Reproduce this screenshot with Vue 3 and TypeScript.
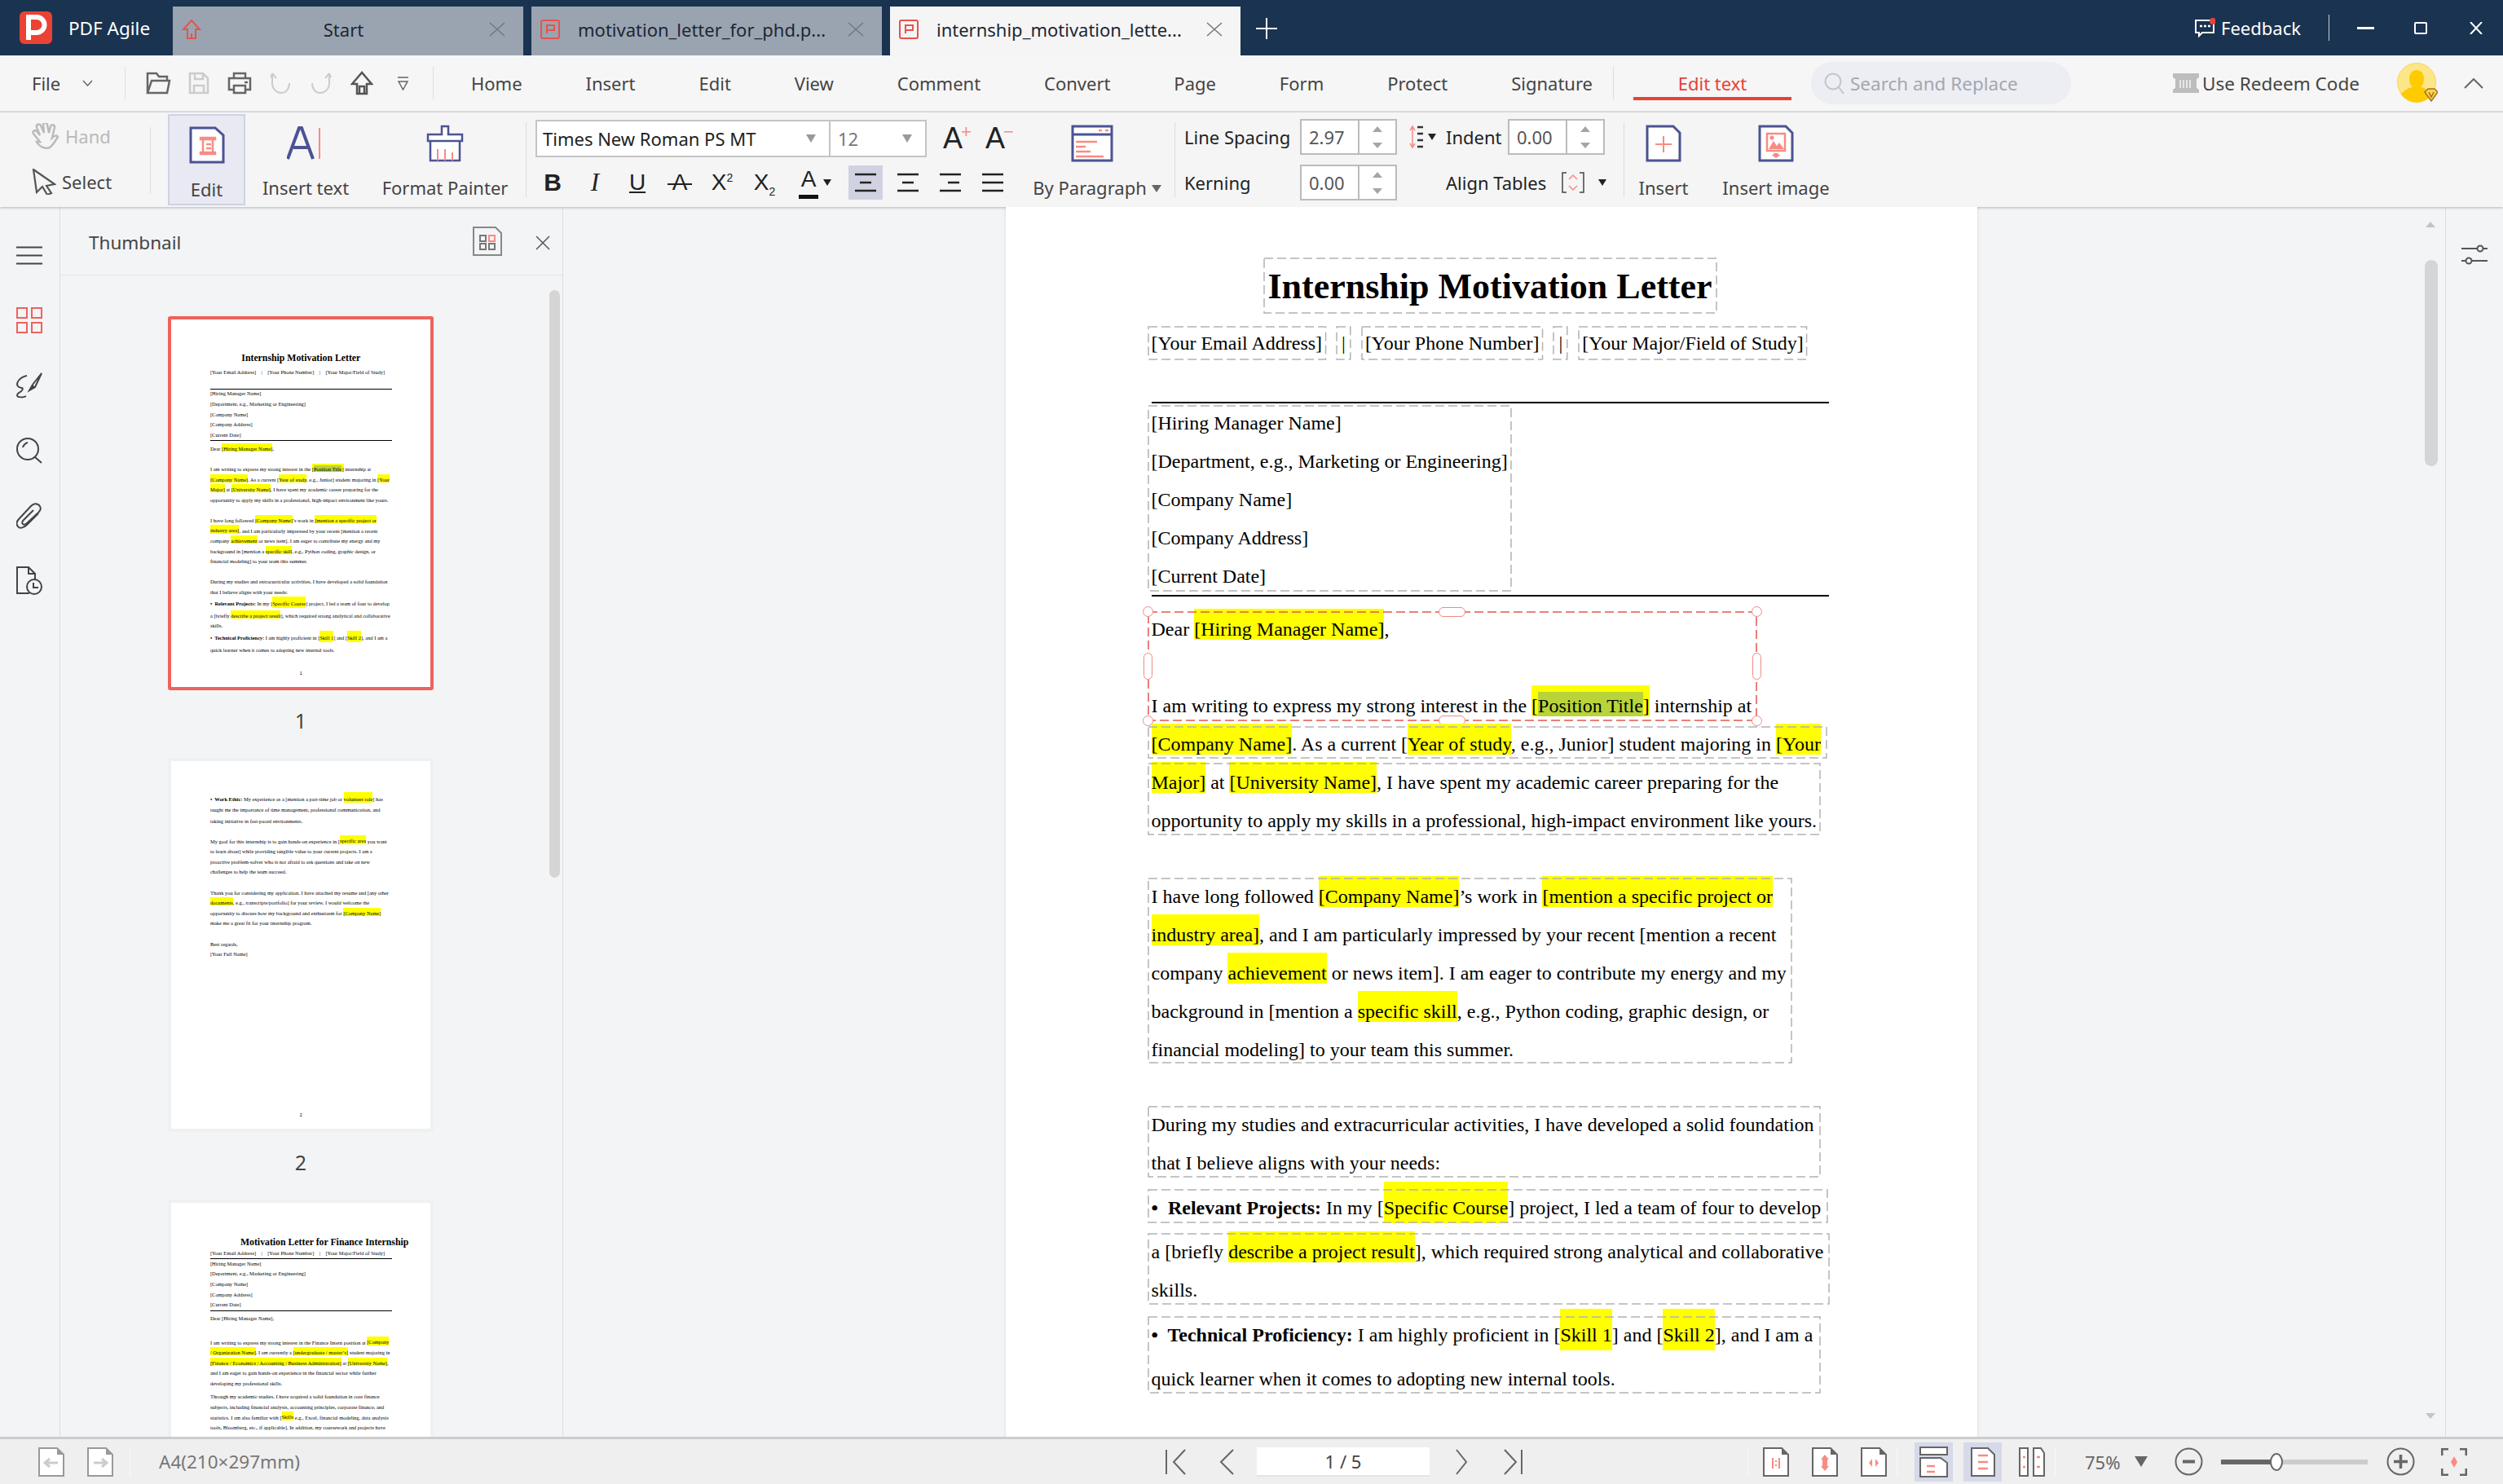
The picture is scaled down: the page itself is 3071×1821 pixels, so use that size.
<template>
  <div class="app">
    <!-- title bar -->
    <header class="titlebar">
      <div class="brand">
        <svg class="logo" width="40" height="40" viewBox="0 0 40 40"><rect width="40" height="40" rx="6" fill="#ea4335"/><path d="M11 35V7h10a9.500 9.500 0 0 1 0 19H11" fill="none" stroke="#fff" stroke-width="6"/></svg>
        <span>PDF Agile</span>
      </div>
      <div class="tab">
        <svg class="tab-ic" width="24" height="24" viewBox="0 0 24 24"><path d="M12 1 2 12h5v11h10V12h5z" fill="none" stroke="#e8524a" stroke-width="2"/><path d="M12 17v6" stroke="#e8524a" stroke-width="2"/></svg>
        <span class="tab-name center">Start</span>
        <svg class="tab-x" width="20" height="18" viewBox="0 0 20 18"><path d="m1 1 18 16M19 1 1 17" stroke="#6f7680" stroke-width="1.500"/></svg>
      </div>
      <div class="tab">
        <svg class="tab-ic" width="24" height="24" viewBox="0 0 24 24"><rect x="1" y="1" width="22" height="22" rx="2" fill="none" stroke="#e8524a" stroke-width="2"/><path d="M8 17V7h9v6H8" fill="none" stroke="#e8524a" stroke-width="2"/></svg>
        <span class="tab-name">motivation_letter_for_phd.p...</span>
        <svg class="tab-x" width="20" height="18" viewBox="0 0 20 18"><path d="m1 1 18 16M19 1 1 17" stroke="#6f7680" stroke-width="1.500"/></svg>
      </div>
      <div class="tab active">
        <svg class="tab-ic" width="24" height="24" viewBox="0 0 24 24"><rect x="1" y="1" width="22" height="22" rx="2" fill="none" stroke="#e8524a" stroke-width="2"/><path d="M8 17V7h9v6H8" fill="none" stroke="#e8524a" stroke-width="2"/></svg>
        <span class="tab-name">internship_motivation_lette...</span>
        <svg class="tab-x" width="20" height="18" viewBox="0 0 20 18"><path d="m1 1 18 16M19 1 1 17" stroke="#6f7680" stroke-width="1.500"/></svg>
      </div>
      <svg class="new-tab" width="28" height="28" viewBox="0 0 28 28"><path d="M14 1v26M1 14h26" stroke="#fff" stroke-width="2"/></svg>
      <div class="win">
        <svg width="26" height="24" viewBox="0 0 26 24"><path d="M2 3h22v15H10l-4 4v-4H2z" fill="#1a3350" stroke="#fff" stroke-width="2"/><path d="M7 10h3M12 10h3M17 10h3" stroke="#fff" stroke-width="2.500"/><circle cx="23" cy="4" r="4" fill="#e8423a"/></svg>
        <span class="feedback">Feedback</span>
        <i class="win-sep"></i>
        <svg class="w-min" width="21" height="3" viewBox="0 0 21 3"><path d="M0 1.500h21" stroke="#fff" stroke-width="3"/></svg>
        <svg class="w-max" width="16" height="15" viewBox="0 0 16 15"><rect x="1" y="1" width="14" height="13" rx="1" fill="none" stroke="#fff" stroke-width="2"/></svg>
        <svg class="w-close" width="16" height="15" viewBox="0 0 16 15"><path d="m1 0 14 15M15 0 1 15" stroke="#fff" stroke-width="2"/></svg>
      </div>
    </header>

    <!-- menu row -->
    <nav class="menubar">
      <span class="file">File</span>
      <svg class="file-caret" width="13" height="8" viewBox="0 0 13 8"><path d="m1 1 5.500 6L12 1" fill="none" stroke="#666" stroke-width="1.500"/></svg>
      <i class="msep first"></i>
      <div class="quick">
        <svg width="32" height="28" viewBox="0 0 32 28"><path d="M3 26V2h11l3 4h10v5M3 26h24l3-15H8z" fill="none" stroke="#666" stroke-width="2.500"/></svg>
        <svg width="28" height="28" viewBox="0 0 28 28"><path d="M3 2h16l6 6v18H3zM9 2v7h10V2M8 26v-9h12v9" fill="none" stroke="#ccc" stroke-width="2.500"/></svg>
        <svg width="30" height="28" viewBox="0 0 30 28"><path d="M8 8V2h14v6M8 22H2V8h26v14h-6M8 17h14v9H8z" fill="none" stroke="#666" stroke-width="2.500"/><path d="M21 13h4" stroke="#666" stroke-width="2.500"/></svg>
        <svg width="26" height="28" viewBox="0 0 26 28"><path d="M3 14V2M3 2l5 6M3 2 1 7M3 14c0 7 5 12 11 12s10-5 10-12" fill="none" stroke="#ccc" stroke-width="2"/></svg>
        <svg width="26" height="28" viewBox="0 0 26 28"><path d="M23 14V2m0 0-5 6m5-6 2 5M23 14c0 7-5 12-11 12S2 21 2 14" fill="none" stroke="#ccc" stroke-width="2"/></svg>
        <svg width="28" height="30" viewBox="0 0 28 30"><path d="M14 2 2 16h6v12h12V16h6zM11 28v-9h6v9" fill="none" stroke="#555" stroke-width="2.500"/></svg>
        <svg width="15" height="18" viewBox="0 0 15 18"><path d="M1 2h13M2 7l5.500 10L13 7z" fill="none" stroke="#666" stroke-width="1.500"/></svg>
      </div>
      <i class="msep"></i>
      <div class="nav">
        <a v-for="m in menus" :key="m">{{ m }}</a>
      </div>
      <i class="msep third"></i>
      <a class="nav-active">Edit text</a>
      <div class="search">
        <svg width="26" height="28" viewBox="0 0 26 28"><circle cx="11" cy="12" r="9.500" fill="none" stroke="#c2c4c8" stroke-width="2"/><path d="m18 19 6 8" stroke="#c2c4c8" stroke-width="2"/></svg>
        <span>Search and Replace</span>
      </div>
      <svg class="redeem" width="32" height="24" viewBox="0 0 32 24"><path d="M0 0h32v5l-3 2v11l3 2v4H0v-4l3-2V7L0 5z" fill="#bdbdbd"/><path d="M9 8v10M13 8v10M17 8v10M21 8v10" stroke="#f5f5f5" stroke-width="1.500"/></svg>
      <span class="redeem-text">Use Redeem Code</span>
      <div class="avatar">
        <svg width="50" height="50" viewBox="0 0 50 50"><circle cx="24" cy="24" r="23.500" fill="#fde68a" stroke="#fcd34d"/><path d="M24 9c6 0 9 5 9 11 0 5-2 8-4 10 6 1 12 5 14 9a23 23 0 0 1-38 0c2-4 8-8 14-9-2-2-4-5-4-10 0-6 3-11 9-11z" fill="#fdcb00"/><path d="m34 36 4-4h8l4 4-8 11z" fill="#fcd34d" stroke="#a8701c" stroke-width="1.500"/><path d="m39 36 3 6 3-6" fill="none" stroke="#a8701c" stroke-width="1.500"/></svg>
      </div>
      <svg class="collapse" width="24" height="13" viewBox="0 0 24 13"><path d="M1 12 12 1l11 11" fill="none" stroke="#666" stroke-width="2"/></svg>
    </nav>

    <!-- ribbon -->
    <section class="ribbon">
      <div class="hand-group">
        <div class="mini off">
          <svg width="34" height="32" viewBox="0 0 34 32"><path d="M10 23 2 13c-2-3 2-5 4-3l4 5L6 5c-1-3 3-5 5-2l4 9-1-10c0-3 5-3 5 0l2 10 2-8c1-3 5-2 5 1l-3 13c2-2 6-4 7-1-3 5-6 10-10 13-5 2-12 0-16-7z" fill="none" stroke="#bbb" stroke-width="2.500"/></svg>
          <span>Hand</span>
        </div>
        <div class="mini">
          <svg width="30" height="32" viewBox="0 0 30 32"><path d="m2 1 26 18-10 2 6 9-5 2-6-10-7 7z" fill="none" stroke="#555" stroke-width="2.200"/></svg>
          <span>Select</span>
        </div>
      </div>
      <i class="rsep"></i>
      <div class="big edit-btn">
        <svg width="44" height="46" viewBox="0 0 44 46"><path d="M2 2h30l10 9v33H2z" fill="#fff" stroke="#4b5394" stroke-width="3"/><path d="M14 14h18v2H14zM14 32h18v2H14zM17 16v16M29 16v16M21 22h6M21 27h6" fill="none" stroke="#f98b85" stroke-width="2.500"/></svg>
        <span>Edit</span>
      </div>
      <div class="big w-text">
        <svg width="46" height="46" viewBox="0 0 46 46"><path d="m1 42 14-38h3l14 38M8 28h18" fill="none" stroke="#4b5394" stroke-width="4"/><path d="M40 4v38" stroke="#f98b85" stroke-width="2"/></svg>
        <span>Insert text</span>
      </div>
      <div class="big w-painter">
        <svg width="46" height="46" viewBox="0 0 46 46"><path d="M19 2h8v10h17v8H2v-8h17zM5 20v24h36V20" fill="#fff" stroke="#4b5394" stroke-width="2.500"/><path d="M14 30v14M23 30v14M32 34v10" stroke="#f98b85" stroke-width="2"/></svg>
        <span>Format Painter</span>
      </div>
      <i class="rsep s2"></i>
      <div class="font-group">
        <div class="font-row">
          <div class="select font-name"><span>Times New Roman PS MT</span><b class="tri gray"></b></div>
          <div class="select font-size"><span>12</span><b class="tri gray"></b></div>
          <span class="grow first-grow">A<em>+</em></span>
          <span class="grow">A<em>−</em></span>
        </div>
        <div class="fmt-row">
          <span class="fmt bold">B</span>
          <span class="fmt ital">I</span>
          <span class="fmt"><u>U</u></span>
          <span class="fmt strike">A</span>
          <span class="fmt">X<sup>2</sup></span>
          <span class="fmt">X<sub>2</sub></span>
          <span class="fmt color"><span class="color-a">A</span><b class="tri dark"></b></span>
          <span v-for="(a, i) in aligns" :key="i" class="align" :class="{ on: i === 0 }">
            <svg width="30" height="26" viewBox="0 0 30 26"><path :d="a" stroke="#222" stroke-width="2.500"/></svg>
          </span>
        </div>
      </div>
      <div class="big w-para">
        <svg width="52" height="46" viewBox="0 0 52 46"><path d="M2 2h48v42H2zM2 12h48" fill="#fff" stroke="#4b5394" stroke-width="3"/><path d="M34 7h4M42 7h4M6 21h26M6 27h12M6 33h18M6 39h34" stroke="#f98b85" stroke-width="2.500"/></svg>
        <span>By Paragraph<b class="tri gray small"></b></span>
      </div>
      <i class="rsep s3"></i>
      <div class="spacing">
        <div class="sp-row">
          <span class="sp-label">Line Spacing</span>
          <div class="num"><span>2.97</span><div class="step"><b class="up"></b><b class="down"></b></div></div>
          <svg class="sp-ic" width="18" height="30" viewBox="0 0 18 30"><path d="M4 2v26M1 7l3-5 3 5M1 23l3 5 3-5" fill="none" stroke="#f98b85" stroke-width="1.500"/><path d="M10 3h7M10 11h7M10 19h7M10 27h7" stroke="#333" stroke-width="2.500"/></svg>
          <b class="tri dark tiny"></b>
          <span class="sp-label indent">Indent</span>
          <div class="num short"><span>0.00</span><div class="step"><b class="up"></b><b class="down"></b></div></div>
        </div>
        <div class="sp-row second">
          <span class="sp-label">Kerning</span>
          <div class="num kern"><span>0.00</span><div class="step"><b class="up"></b><b class="down"></b></div></div>
          <span class="sp-label align-tables">Align Tables</span>
          <svg class="brack" width="28" height="26" viewBox="0 0 28 26"><path d="M6 1H1v24h5M22 1h5v24h-5" fill="none" stroke="#444" stroke-width="1.500"/><path d="m9 9 5-5 5 5M9 17l5 5 5-5" fill="none" stroke="#f98b85" stroke-width="1.500"/></svg>
          <b class="tri dark tiny"></b>
        </div>
      </div>
      <i class="rsep s4"></i>
      <div class="big w-insert">
        <svg width="44" height="46" viewBox="0 0 44 46"><path d="M2 2h32l8 8v34H2z" fill="#fff" stroke="#4b5394" stroke-width="3"/><path d="M22 14v20M12 24h20" stroke="#f98b85" stroke-width="2"/></svg>
        <span>Insert</span>
      </div>
      <div class="big w-image">
        <svg width="44" height="46" viewBox="0 0 44 46"><path d="M2 2h32l8 8v34H2z" fill="#fff" stroke="#4b5394" stroke-width="3"/><path d="M11 11h22v21H11z" fill="#fff" stroke="#f98b85" stroke-width="2.500"/><path d="m13 30 6-10 4 6 3-4 6 8z" fill="#f98b85"/><circle cx="17" cy="16" r="2.500" fill="#f98b85"/><path d="M19 35h6v2h3l-6 4-6-4h3z" fill="#f98b85"/></svg>
        <span>Insert image</span>
      </div>
    </section>

    <div class="work">
      <!-- left rail -->
      <aside class="rail">
        <svg width="32" height="23" viewBox="0 0 32 23"><path d="M0 1.500h32M0 11.500h32M0 21.500h32" stroke="#444" stroke-width="2"/></svg>
        <svg width="32" height="32" viewBox="0 0 32 32"><path d="M1 1h12v12H1zM19 1h12v12H19zM1 19h12v12H1zM19 19h12v12H19z" fill="none" stroke="#ef6259" stroke-width="2"/></svg>
        <svg width="34" height="32" viewBox="0 0 34 32"><path d="M14 4c-9 2-14 9-11 13 2 3 8 0 5 5-2 3-6 3-6 6s8 3 11 1M32 1 21 15l-4 7 7-4z" fill="none" stroke="#444" stroke-width="2"/><path d="m21 15 3 3-7 4z" fill="#444"/></svg>
        <svg width="32" height="32" viewBox="0 0 32 32"><circle cx="14" cy="14" r="13" fill="none" stroke="#444" stroke-width="2"/><path d="M8 12c1-3 3-5 6-6M23 24l8 7" fill="none" stroke="#444" stroke-width="2"/></svg>
        <svg width="32" height="34" viewBox="0 0 32 34"><path d="M27 13 13 27c-4 4-9 5-11 2-3-3-1-7 2-10L18 4c3-3 7-4 10-1s2 6-1 9L13 25c-2 2-4 2-5 1s-1-3 1-5l12-12" fill="none" stroke="#444" stroke-width="2"/></svg>
        <svg width="32" height="36" viewBox="0 0 32 36"><path d="M16 33H1V1h14l8 8v8M15 1v8h8" fill="none" stroke="#444" stroke-width="2"/><circle cx="22" cy="25" r="9" fill="#f3f4f6" stroke="#444" stroke-width="2"/><path d="M21 20v6h6" fill="none" stroke="#444" stroke-width="2"/></svg>
      </aside>

      <!-- thumbnail panel -->
      <aside class="side">
        <div class="side-head">
          <span>Thumbnail</span>
          <svg class="side-view" width="36" height="36" viewBox="0 0 36 36"><path d="M1 1h27l7 7v27H1z" fill="#f3f4f6" stroke="#888" stroke-width="2"/><path d="M9 11h7v7H9zM9 21h7v7H9zM20 21h7v7h-7z" fill="none" stroke="#777" stroke-width="2"/><path d="M20 11h7v7h-7z" fill="none" stroke="#f98b85" stroke-width="2"/></svg>
          <svg class="side-x" width="18" height="18" viewBox="0 0 18 18"><path d="m1 1 16 16M17 1 1 17" stroke="#555" stroke-width="1.500"/></svg>
        </div>
        <div class="thumbs">
          <div v-for="(pg, n) in pages" :key="n" class="thumb-item">
            <div class="thumb" :class="{ current: n === 0 }">
              <div class="sheet small">
                <div v-for="(b, i) in pg" :key="i" class="blk" :class="b.kind" :style="blockStyle(pg, i)">
                  <template v-if="b.kind === 'cells'">
                    <span v-for="(c, ci) in b.lines" :key="ci" class="cell" :class="{ bar: c === '|' }">{{ c }}</span>
                  </template>
                  <div v-else :style="rowsStyle(b)">
                    <div v-for="(l, j) in b.lines" :key="j" class="row" :style="rowStyle(b)">
                      <span v-for="(s, k) in parse(l)" :key="k" :class="s.cls">{{ s.t }}</span>
                    </div>
                  </div>
                </div>
              </div>
            </div>
            <div class="thumb-no">{{ n + 1 }}</div>
          </div>
        </div>
        <i class="side-bar"></i>
      </aside>

      <!-- document -->
      <main class="doc">
        <div class="sheet big-sheet">
          <div v-for="(b, i) in pages[0]" :key="i" class="blk" :class="b.kind" :style="blockStyle(pages[0], i)">
            <template v-if="b.kind === 'cells'">
              <span v-for="(c, ci) in b.lines" :key="ci" class="cell" :class="{ bar: c === '|' }">{{ c }}<svg class="dash"><rect width="100%" height="100%" /></svg></span>
            </template>
            <div v-else :style="rowsStyle(b)">
              <div v-for="(l, j) in b.lines" :key="j" class="row" :style="rowStyle(b)">
                <span v-for="(s, k) in parse(l)" :key="k" :class="s.cls">{{ s.t }}</span>
              </div>
            </div>
            <svg v-if="b.kind === 'text' || b.kind === 'title'" class="dash" :class="{ red: b.active }"><rect width="100%" height="100%" /></svg>
            <template v-if="b.active">
              <i class="h-dot tl"></i><i class="h-dot tr"></i><i class="h-dot bl"></i><i class="h-dot br"></i>
              <i class="h-pill p-top"></i><i class="h-pill p-bottom"></i>
              <i class="h-pill p-left"></i><i class="h-pill p-right"></i>
            </template>
          </div>
        </div>
        <i class="doc-bar"></i>
        <b class="doc-arrow up"></b>
        <b class="doc-arrow down"></b>
      </main>

      <aside class="rpanel">
        <svg width="32" height="26" viewBox="0 0 32 26"><path d="M0 5h20M26 5h6M0 20h6M12 20h20" stroke="#555" stroke-width="2"/><circle cx="23" cy="5" r="3.500" fill="none" stroke="#555" stroke-width="2"/><circle cx="9" cy="20" r="3.500" fill="none" stroke="#555" stroke-width="2"/></svg>
      </aside>
    </div>

    <!-- status bar -->
    <footer class="status">
      <svg class="st-a" width="32" height="36" viewBox="0 0 32 36"><path d="M1 1h22l8 8v26H1z" fill="#fff" stroke="#999" stroke-width="2"/><path d="M23 1v8h8z" fill="#999"/><path d="M24 19H9m5-5-6 5 6 5" fill="none" stroke="#ccc" stroke-width="3"/></svg>
      <svg class="st-b" width="32" height="36" viewBox="0 0 32 36"><path d="M1 1h22l8 8v26H1z" fill="#fff" stroke="#999" stroke-width="2"/><path d="M23 1v8h8z" fill="#999"/><path d="M8 19h15m-5-5 6 5-6 5" fill="none" stroke="#ccc" stroke-width="3"/></svg>
      <i class="st-sep"></i>
      <span class="st-size">A4(210×297mm)</span>
      <div class="pager">
        <svg width="26" height="32" viewBox="0 0 26 32"><path d="M1 1v30M24 1 10 16l14 15" fill="none" stroke="#666" stroke-width="2"/></svg>
        <svg class="pg-prev" width="20" height="32" viewBox="0 0 20 32"><path d="M18 1 3 16l15 15" fill="none" stroke="#666" stroke-width="2"/></svg>
        <div class="pg-input">1 / 5</div>
        <svg class="pg-next" width="16" height="32" viewBox="0 0 16 32"><path d="m2 1 12 15L2 31" fill="none" stroke="#666" stroke-width="2"/></svg>
        <svg class="pg-last" width="24" height="32" viewBox="0 0 24 32"><path d="M23 1v30M2 1l14 15L2 31" fill="none" stroke="#666" stroke-width="2"/></svg>
      </div>
      <i class="st-sep v1"></i>
      <svg class="v-ic" width="32" height="36" viewBox="0 0 32 36"><path d="M1 1h22l8 8v26H1z" fill="#fff" stroke="#666" stroke-width="2"/><path d="M23 1v8h8z" fill="#666"/><path d="M12 13v13M20 13v13M15 17h2M15 22h2" stroke="#f98b85" stroke-width="2"/></svg>
      <svg class="v-ic" width="32" height="36" viewBox="0 0 32 36"><path d="M1 1h22l8 8v26H1z" fill="#fff" stroke="#666" stroke-width="2"/><path d="M23 1v8h8z" fill="#666"/><path d="m16 9 5 6H11zm0 20 5-6H11z" fill="#f98b85"/><path d="M16 15v8" stroke="#f98b85" stroke-width="6"/></svg>
      <svg class="v-ic" width="32" height="36" viewBox="0 0 32 36"><path d="M1 1h22l8 8v26H1z" fill="#fff" stroke="#666" stroke-width="2"/><path d="M23 1v8h8z" fill="#666"/><path d="m10 19 4-5v10zM22 19l-4-5v10z" fill="#f98b85"/></svg>
      <i class="st-sep v2"></i>
      <span class="v-on first-on"><svg width="35" height="38" viewBox="0 0 35 38"><path d="M1 1h33v9H1zM1 14h25l8 6v17H1z" fill="#fff" stroke="#666" stroke-width="2"/><path d="M9 24h10M9 31h10" stroke="#f98b85" stroke-width="2.500"/></svg></span>
      <span class="v-on"><svg width="30" height="36" viewBox="0 0 30 36"><path d="M1 1h20l8 8v26H1z" fill="#fff" stroke="#666" stroke-width="2"/><path d="M9 10h12M9 18h12M9 26h12" stroke="#f98b85" stroke-width="2.500"/></svg></span>
      <svg class="v-two" width="32" height="36" viewBox="0 0 32 36"><path d="M1 1h10v34H1zM18 1h9l4 6v28H18z" fill="#fff" stroke="#666" stroke-width="2"/><path d="M5 12h3M5 24h3M22 12h4M22 24h4" stroke="#f98b85" stroke-width="2.500"/></svg>
      <i class="st-sep v3"></i>
      <span class="zoom-val">75%</span>
      <b class="tri zoom-tri"></b>
      <svg class="z-minus" width="35" height="35" viewBox="0 0 35 35"><circle cx="17.500" cy="17.500" r="16" fill="none" stroke="#666" stroke-width="2"/><path d="M10 17.500h15" stroke="#666" stroke-width="4"/></svg>
      <div class="slider"><i class="fill"></i><i class="knob"></i></div>
      <svg class="z-plus" width="35" height="35" viewBox="0 0 35 35"><circle cx="17.500" cy="17.500" r="16" fill="none" stroke="#666" stroke-width="2"/><path d="M9 17.500h17M17.500 9v17" stroke="#666" stroke-width="3.500"/></svg>
      <svg class="z-fit" width="32" height="34" viewBox="0 0 32 34"><path d="M1 9V1h8M23 1h8v8M1 25v8h8M23 33h8v-8" fill="none" stroke="#666" stroke-width="3"/><path d="m16 10 4 7-4 7-4-7z" fill="#f98b85"/></svg>
    </footer>
  </div>
</template>

<script setup lang="ts">

interface Block {
  kind: 'title' | 'cells' | 'rule' | 'text' | 'pno'
  y: number
  h: number
  w?: number
  off?: number
  pitch?: number
  active?: boolean
  lines: string[]
}

const menus = ['Home', 'Insert', 'Edit', 'View', 'Comment', 'Convert', 'Page', 'Form', 'Protect', 'Signature']

const aligns = [
  'M2 3h26M8 13h14M2 23h26',
  'M2 3h26M8 13h14M2 23h26',
  'M2 3h26M12 13h14M2 23h26',
  'M2 3h26M2 13h26M2 23h26'
]

const contact = ['[Your Email Address]', '|', '[Your Phone Number]', '|', '[Your Major/Field of Study]']
const address = ['[Hiring Manager Name]', '[Department, e.g., Marketing or Engineering]', '[Company Name]', '[Company Address]', '[Current Date]']

// y is measured from the top of the sheet; blocks are stacked with margins
const pages: Block[][] = [
  [
    { kind: 'title', y: 140, h: 67, w: 555, lines: ['Internship Motivation Letter'] },
    { kind: 'cells', y: 224, h: 40, lines: contact },
    { kind: 'rule', y: 316, h: 2, lines: [] },
    { kind: 'text', y: 321, h: 227, w: 445, off: 21, lines: address },
    { kind: 'rule', y: 553, h: 2, lines: [] },
    {
      kind: 'text', y: 574, h: 133, w: 746, off: 21, active: true, lines: [
        'Dear {[Hiring Manager Name]},',
        '',
        'I am writing to express my strong interest in the {[}~Position Title~{]} internship at'
      ]
    },
    { kind: 'text', y: 715, h: 38, w: 832, off: 21, lines: ['{[Company Name]}. As a current [{Year of study}, e.g., Junior] student majoring in {[Your}'] },
    {
      kind: 'text', y: 760, h: 87, w: 824, off: 23, lines: [
        '{Major]} at {[University Name]}, I have spent my academic career preparing for the',
        'opportunity to apply my skills in a professional, high-impact environment like yours.'
      ]
    },
    {
      kind: 'text', y: 901, h: 226, w: 789, off: 22, lines: [
        'I have long followed {[Company Name]}’s work in {[mention a specific project or}',
        '{industry area]}, and I am particularly impressed by your recent [mention a recent',
        'company {achievement} or news item]. I am eager to contribute my energy and my',
        'background in [mention a {specific skill}, e.g., Python coding, graphic design, or',
        'financial modeling] to your team this summer.'
      ]
    },
    {
      kind: 'text', y: 1181, h: 86, w: 824, off: 22, lines: [
        'During my studies and extracurricular activities, I have developed a solid foundation',
        'that I believe aligns with your needs:'
      ]
    },
    { kind: 'text', y: 1283, h: 40, w: 833, off: 22, lines: ['*•  Relevant Projects:* In my [<Specific Course>] project, I led a team of four to develop'] },
    {
      kind: 'text', y: 1337, h: 86, w: 835, off: 22, lines: [
        'a [briefly {describe a project result}], which required strong analytical and collaborative',
        'skills.'
      ]
    },
    {
      kind: 'text', y: 1439, h: 93, w: 824, off: 22, pitch: 54, lines: [
        '*•  Technical Proficiency:* I am highly proficient in [<Skill 1>] and [<Skill 2>], and I am a',
        'quick learner when it comes to adopting new internal tools.'
      ]
    },
    { kind: 'pno', y: 1600, h: 38, lines: ['1'] }
  ],
  [
    {
      kind: 'text', y: 152, h: 150, w: 824, off: 22, pitch: 51, lines: [
        '*•  Work Ethic:* My experience as a [mention a part-time job or <volunteer role>] has',
        'taught me the importance of time management, professional communication, and',
        'taking initiative in fast-paced environments.'
      ]
    },
    {
      kind: 'text', y: 347, h: 190, w: 824, off: 22, lines: [
        'My goal for this internship is to gain hands-on experience in [{specific area} you want',
        'to learn about] while providing tangible value to your current projects. I am a',
        'proactive problem-solver who is not afraid to ask questions and take on new',
        'challenges to help the team succeed.'
      ]
    },
    {
      kind: 'text', y: 582, h: 190, w: 824, off: 22, lines: [
        'Thank you for considering my application. I have attached my resume and [any other',
        '{documents}, e.g., transcripts/portfolio] for your review. I would welcome the',
        'opportunity to discuss how my background and enthusiasm for {[Company Name]}',
        'make me a great fit for your internship program.'
      ]
    },
    { kind: 'text', y: 818, h: 90, w: 824, off: 22, pitch: 43, lines: ['Best regards,', '[Your Full Name]'] },
    { kind: 'pno', y: 1600, h: 38, lines: ['2'] }
  ],
  [
    { kind: 'title', y: 145, h: 64, w: 600, lines: ['Motivation Letter for Finance Internship'] },
    { kind: 'cells', y: 211, h: 40, lines: contact },
    { kind: 'rule', y: 252, h: 2, lines: [] },
    { kind: 'text', y: 258, h: 230, w: 445, off: 22, lines: address },
    { kind: 'rule', y: 493, h: 2, lines: [] },
    { kind: 'text', y: 510, h: 44, w: 445, off: 22, lines: ['Dear [Hiring Manager Name],'] },
    {
      kind: 'text', y: 620, h: 235, w: 824, off: 22, lines: [
        'I am writing to express my strong interest in the Finance Intern position at {[Company}',
        '{/ Organization Name]}. I am currently a {[undergraduate / master’s]} student majoring in',
        '{[Finance / Economics / Accounting / Business Administration]} at {[University Name]},',
        'and I am eager to gain hands-on experience in the financial sector while further',
        'developing my professional skills.'
      ]
    },
    {
      kind: 'text', y: 869, h: 235, w: 824, off: 22, lines: [
        'Through my academic studies, I have acquired a solid foundation in core finance',
        'subjects, including financial analysis, accounting principles, corporate finance, and',
        'statistics. I am also familiar with [{Skills} e.g., Excel, financial modeling, data analysis',
        'tools, Bloomberg, etc., if applicable]. In addition, my coursework and projects have',
        'strengthened my analytical thinking, attention to detail, and problem-solving skills.'
      ]
    }
  ]
]

// small markup for the letter: {highlight} <tall highlight> *bold* ~selected~
function parse(line: string): { t: string; cls: string }[] {
  const parts = line.match(/\{[^}]*\}|<[^>]*>|\*[^*]*\*|~[^~]*~|[^{<*~]+/g) || []
  const kinds: Record<string, string> = { '{': 'hl', '<': 'hl tall', '*': 'strong', '~': 'hl sel' }
  return parts.map(p => {
    const cls = kinds[p[0]]
    return cls ? { t: p.slice(1, -1), cls } : { t: p, cls: '' }
  })
}

function blockStyle(page: Block[], i: number): Record<string, string> {
  const b = page[i]
  const prev = page[i - 1]
  const top = prev ? b.y - prev.y - prev.h : b.y
  const style: Record<string, string> = { marginTop: top + 'px', height: b.h + 'px' }
  if (b.w) style.width = b.w + 'px'
  return style
}

function rowsStyle(b: Block): Record<string, string> {
  if (b.kind !== 'text') return {}
  return { marginTop: (b.off || 22) - (b.pitch || 47) / 2 + 'px' }
}

function rowStyle(b: Block): Record<string, string> {
  if (b.kind !== 'text') return {}
  const p = (b.pitch || 47) + 'px'
  return { height: p, lineHeight: p }
}

</script>

<style scoped>

.app {
  width: 3071px;
  height: 1821px;
  display: flex;
  flex-direction: column;
  overflow: hidden;
  background: #f3f4f6;
  font-family: "Noto Sans", sans-serif;
  font-size: 22px;
  color: #444;
}

i {
  display: block;
  font-style: normal;
}

.tri {
  display: inline-block;
  width: 0;
  height: 0;
  border-left: 6px solid transparent;
  border-right: 6px solid transparent;
  border-top: 10px solid #999;
}

.tri.dark {
  border-top-color: #222;
  border-left-width: 5px;
  border-right-width: 5px;
  border-top-width: 8px;
}

/* title bar */

.titlebar {
  height: 68px;
  flex: none;
  display: flex;
  align-items: flex-end;
  background: #1a3350;
  color: #fff;
}

.brand {
  width: 212px;
  height: 68px;
  box-sizing: border-box;
  padding-left: 24px;
  display: flex;
  align-items: center;
  gap: 20px;
  font-size: 22.5px;
}

.tab {
  width: 430px;
  height: 60px;
  margin-right: 10px;
  box-sizing: border-box;
  padding: 0 0 4px 11px;
  display: flex;
  align-items: center;
  background: #9aa4b1;
  color: #1d2733;
}

.tab.active {
  background: #f5f5f5;
}

.tab-ic {
  flex: none;
  margin-right: 22px;
}

.tab-name {
  flex: 1;
  white-space: nowrap;
}

.tab-name.center {
  text-align: center;
  padding-right: 26px;
}

.tab-x {
  flex: none;
  margin-right: 22px;
}

.new-tab {
  align-self: center;
  margin-left: 8px;
  margin-top: 2px;
}

.win {
  margin-left: auto;
  height: 68px;
  display: flex;
  align-items: center;
  padding-right: 25px;
}

.feedback {
  margin-left: 7px;
}

.win-sep {
  width: 1px;
  height: 32px;
  margin-left: 34px;
  background: #c8ced6;
}

.w-min {
  margin-left: 34px;
}

.w-max {
  margin-left: 49px;
}

.w-close {
  margin-left: 52px;
}

/* menu row */

.menubar {
  height: 70px;
  flex: none;
  display: flex;
  align-items: center;
  box-sizing: border-box;
  background: #f6f6f6;
  border-bottom: 2px solid #dedede;
}

.file {
  margin-left: 39px;
  width: 62px;
}

.file-caret {
  flex: none;
}

.msep {
  width: 1px;
  height: 40px;
  background: #dddddd;
  flex: none;
}

.msep.first {
  margin-left: 39px;
}

.quick {
  width: 377px;
  box-sizing: border-box;
  padding-left: 15px;
  display: grid;
  grid-template-columns: repeat(7, 50px);
  justify-items: center;
  align-items: center;
}

.nav {
  width: 1376px;
  display: flex;
  justify-content: space-between;
  margin-left: 46px;
}

.msep.third {
  margin-left: 25px;
}

.nav-active {
  width: 194px;
  box-sizing: border-box;
  height: 55px;
  line-height: 68px;
  margin-left: 24px;
  text-align: center;
  color: #e84135;
  border-bottom: 4px solid #e84135;
  align-self: flex-start;
}

.search {
  width: 319px;
  height: 52px;
  margin-left: 24px;
  box-sizing: border-box;
  padding-left: 16px;
  display: flex;
  align-items: center;
  gap: 6px;
  border-radius: 26px;
  background: #eceef4;
  color: #a4a7ae;
  font-size: 22.5px;
}

.redeem {
  margin-left: 125px;
}

.redeem-text {
  margin-left: 4px;
  font-size: 22.5px;
}

.avatar {
  margin-left: 46px;
  display: flex;
}

.collapse {
  margin-left: 32px;
}

/* ribbon */

.ribbon {
  height: 116px;
  flex: none;
  display: flex;
  box-sizing: border-box;
  background: #f5f5f5;
  box-shadow: 0 1px 3px rgba(0, 0, 0, 0.25);
  position: relative;
}

.hand-group {
  width: 184px;
  box-sizing: border-box;
  padding: 13px 0 0 39px;
  display: flex;
  flex-direction: column;
  gap: 24px;
}

.mini {
  display: flex;
  align-items: center;
  height: 32px;
  gap: 7px;
}

.mini.off {
  color: #b9b9b9;
}

.mini svg {
  flex: none;
}

.rsep {
  width: 1px;
  height: 82px;
  margin-top: 18px;
  background: #dddddd;
  flex: none;
}

.rsep.s2,
.rsep.s3,
.rsep.s4 {
  height: 92px;
  margin-top: 12px;
}

.big {
  display: flex;
  flex-direction: column;
  align-items: center;
  padding-top: 15px;
  height: 100%;
  box-sizing: border-box;
  white-space: nowrap;
  flex: none;
}

.big svg {
  flex: none;
}

.big span {
  margin-top: 16px;
  line-height: 30px;
}

.edit-btn {
  width: 95px;
  height: 112px;
  margin: 2px 0 0 21px;
  padding-top: 13px;
  background: #e9e9f3;
  border: 2px solid #cfd2e3;
}

.w-text {
  width: 106px;
  margin-left: 21px;
}

.w-painter {
  width: 154px;
  margin-left: 41px;
}

.rsep.s2 {
  margin-left: 22px;
}

.font-group {
  width: 589px;
  margin-left: 11px;
  padding-top: 9px;
  box-sizing: border-box;
  flex: none;
}

.font-row {
  display: flex;
  align-items: center;
  height: 46px;
}

.select {
  height: 46px;
  flex: none;
  box-sizing: border-box;
  display: flex;
  align-items: center;
  background: #fff;
  border: 2px solid #c4c4c4;
  color: #222;
}

.font-name {
  width: 362px;
  padding-left: 7px;
}

.font-name .tri {
  margin-left: auto;
  margin-right: 16px;
}

.font-size {
  width: 118px;
  padding-left: 9px;
  border-left: 0;
  color: #777;
}

.font-size .tri {
  margin-left: auto;
  margin-right: 16px;
}

.grow {
  flex: none;
  font-family: "Liberation Sans", sans-serif;
  font-size: 36px;
  line-height: 46px;
  color: #222;
  position: relative;
  width: 52px;
}

.first-grow {
  margin-left: 20px;
}

.grow em {
  position: absolute;
  left: 22px;
  top: -8px;
  font-size: 22px;
  font-style: normal;
  color: #f98b85;
}

.fmt-row {
  margin: 10px 0 0 -5px;
  height: 42px;
  display: flex;
  align-items: center;
}

.fmt {
  width: 52px;
  text-align: center;
  flex: none;
  font-family: "Liberation Sans", sans-serif;
  font-size: 28px;
  line-height: 42px;
  color: #222;
}

.fmt sup,
.fmt sub {
  font-size: 14px;
  line-height: 0;
}

.bold {
  font-weight: 700;
  font-size: 30px;
}

.ital {
  font-style: italic;
  font-family: "Liberation Serif", serif;
  font-size: 31px;
}

.strike {
  background: linear-gradient(#222, #222) center 55% / 30px 2px no-repeat;
}

.color {
  width: 77px;
  text-align: left;
  padding-left: 16px;
  box-sizing: border-box;
  display: flex;
  align-items: center;
}

.color-a {
  display: block;
  width: 24px;
  height: 34px;
  line-height: 30px;
  text-align: center;
  border-bottom: 5px solid #111;
}

.color .tri {
  margin-left: 6px;
}

.align {
  width: 42px;
  height: 42px;
  margin-right: 10px;
  display: flex;
  align-items: center;
  justify-content: center;
  flex: none;
}

.align.on {
  background: #d0d2e2;
}

.w-para {
  width: 150px;
  margin-left: 25px;
}

.w-para svg {
  margin-left: -12px;
}

.w-para span {
  display: flex;
  align-items: center;
  gap: 6px;
}

.tri.small {
  border-left-width: 6px;
  border-right-width: 6px;
  border-top-width: 9px;
  border-top-color: #666;
  margin-top: 3px;
}

.rsep.s3 {
  margin-left: 20px;
}

.spacing {
  width: 528px;
  margin-left: 11px;
  padding-top: 8px;
  box-sizing: border-box;
  flex: none;
}

.sp-row {
  display: flex;
  align-items: center;
  height: 44px;
  white-space: nowrap;
  color: #222;
}

.sp-row.second {
  margin-top: 12px;
}

.sp-label {
  width: 142px;
  flex: none;
}

.num {
  width: 119px;
  height: 44px;
  flex: none;
  display: flex;
  box-sizing: border-box;
  align-items: center;
  background: #fff;
  border: 2px solid #bbbbbb;
  padding-left: 9px;
  color: #555;
}

.num span {
  flex: 1;
}

.step {
  width: 44px;
  height: 100%;
  flex: none;
  border-left: 2px solid #bbbbbb;
  display: flex;
  flex-direction: column;
  align-items: center;
  justify-content: center;
  gap: 13px;
}

.step b,
.doc-arrow {
  width: 0;
  height: 0;
  border-left: 6px solid transparent;
  border-right: 6px solid transparent;
}

.step .up {
  border-bottom: 7px solid #a5a5a5;
}

.step .down {
  border-top: 7px solid #a5a5a5;
}

.sp-ic {
  margin-left: 15px;
}

.tri.tiny {
  margin: 0 0 0 5px;
  flex: none;
}

.indent {
  width: 76px;
  margin-left: 12px;
}

.num.kern {
  width: 119px;
}

.align-tables {
  width: 125px;
  margin-left: 60px;
}

.brack {
  margin-left: 17px;
  margin-right: 12px;
}

.rsep.s4 {
  margin-left: 11px;
}

.w-insert {
  width: 60px;
  margin-left: 18px;
}

.w-image {
  width: 130px;
  margin-left: 43px;
}

/* work area */

.work {
  flex: 1;
  min-height: 0;
  display: flex;
}

.rail {
  width: 74px;
  flex: none;
  box-sizing: border-box;
  border-right: 1px solid #dddddd;
  padding-top: 48px;
  display: flex;
  flex-direction: column;
  align-items: center;
  gap: 48px;
}

.rail svg {
  flex: none;
  margin-right: 2px;
}

.rail svg:first-child {
  margin-bottom: 4px;
}

.rail svg:last-child {
  margin-top: -4px;
}

.side {
  width: 617px;
  flex: none;
  box-sizing: border-box;
  border-right: 1px solid #dddddd;
  display: flex;
  flex-direction: column;
  position: relative;
  overflow: hidden;
}

.side-head {
  height: 84px;
  flex: none;
  box-sizing: border-box;
  padding: 4px 0 0 35px;
  border-bottom: 1px solid #e4e5e8;
  display: flex;
  align-items: center;
  font-size: 22.5px;
  color: #444;
}

.side-view {
  margin: -4px 0 0 auto;
}

.side-x {
  margin: 0 15px 0 41px;
}

.thumbs {
  width: 590px;
  padding-top: 50px;
  display: flex;
  flex-direction: column;
  align-items: center;
  gap: 0;
}

.thumb-item {
  height: 542px;
  flex: none;
}

.thumb {
  width: 326px;
  height: 459px;
  box-sizing: border-box;
  border: 4px solid #eff0f2;
  border-radius: 3px;
  overflow: hidden;
}

.thumb.current {
  border-color: #ef625b;
}

.thumb-no {
  height: 83px;
  display: flex;
  align-items: center;
  justify-content: center;
  font-size: 25px;
  color: #444;
  padding-bottom: 9px;
  box-sizing: border-box;
}

.side-bar {
  position: absolute;
  right: 3px;
  top: 102px;
  width: 13px;
  height: 721px;
  background: #d5d5d5;
  border-radius: 7px;
}

/* letter sheet, the same markup is shrunk for the thumbnails */

.sheet {
  width: 1192px;
  height: 1686px;
  flex: none;
  display: flow-root;
  box-sizing: border-box;
  padding-left: 179px;
  background: #fff;
  color: #000;
  font-family: "Liberation Serif", serif;
  font-size: 24px;
  line-height: 1.2;
}

.sheet.small {
  zoom: 0.268;
}

.blk {
  position: relative;
  display: flow-root;
  box-sizing: border-box;
  margin-left: -4px;
  padding-left: 4px;
  white-space: pre;
}

.row {
  white-space: pre;
}

.hl {
  background: #ffff00;
  padding: 12px 0 0;
}

.hl.tall {
  padding: 19px 0 6px;
}

.hl.sel {
  background: linear-gradient(#ffff00 0 8px, #b8d438 8px);
}

.strong {
  font-weight: 700;
}

.title {
  margin-left: 138px;
  padding: 0;
  font-size: 44px;
  font-weight: 700;
  line-height: 69px;
  text-align: center;
}

.title .row {
  height: 67px;
}

.cells {
  display: flex;
  gap: 14px;
  margin-left: -4px;
  padding-left: 0;
}

.cell {
  position: relative;
  display: block;
  height: 40px;
  line-height: 40px;
  padding: 0 4px;
  flex: none;
}

.cell.bar {
  padding: 0 6px;
}

.rule {
  width: 831px;
  margin-left: 0;
  padding: 0;
  background: #000;
}

.pno {
  width: 831px;
  margin-left: 0;
  padding: 0;
  line-height: 38px;
  font-family: "Liberation Sans", sans-serif;
  font-size: 20px;
  text-align: center;
}

.dash {
  position: absolute;
  left: 0;
  top: 0;
  width: 100%;
  height: 100%;
  overflow: visible;
  pointer-events: none;
}

.dash rect {
  fill: none;
  stroke: #b2b2b2;
  stroke-width: 1.5;
  stroke-dasharray: 11 5;
}

.dash.red rect {
  stroke: #e2574f;
}

.h-dot {
  position: absolute;
  width: 13px;
  height: 13px;
  box-sizing: border-box;
  background: #fff;
  border: 1.500px solid #ef8a84;
  border-radius: 50%;
}

.tl { left: -7px; top: -7px; }
.tr { right: -7px; top: -7px; }
.bl { left: -7px; bottom: -7px; }
.br { right: -7px; bottom: -7px; }

.h-pill {
  position: absolute;
  box-sizing: border-box;
  background: #fff;
  border: 1.500px solid #ef8a84;
  border-radius: 6px;
}

.p-top,
.p-bottom {
  left: 50%;
  width: 33px;
  height: 12px;
  margin-left: -17px;
}

.p-top { top: -6px; }
.p-bottom { bottom: -6px; }

.p-left,
.p-right {
  top: 50%;
  width: 11px;
  height: 33px;
  margin-top: -17px;
}

.p-left { left: -6px; }
.p-right { right: -6px; }

/* document */

.doc {
  flex: 1;
  min-width: 0;
  box-sizing: border-box;
  padding-right: 32px;
  display: flex;
  justify-content: center;
  position: relative;
  overflow: hidden;
}

.big-sheet {
  margin-top: -77px;
  box-shadow: 0 0 4px rgba(0, 0, 0, 0.12);
}

.doc-bar {
  position: absolute;
  right: 9px;
  top: 65px;
  width: 16px;
  height: 253px;
  background: #d5d5d5;
  border-radius: 8px;
}

.doc-arrow {
  position: absolute;
  right: 12px;
}

.doc-arrow.up {
  top: 18px;
  border-bottom: 7px solid #c4c4c4;
}

.doc-arrow.down {
  bottom: 22px;
  border-top: 7px solid #c4c4c4;
}

.rpanel {
  width: 71px;
  flex: none;
  box-sizing: border-box;
  border-left: 1px solid #dddddd;
  padding: 46px 0 0 19px;
}

/* status bar */

.status {
  height: 58px;
  flex: none;
  display: flex;
  align-items: center;
  box-sizing: border-box;
  background: #efefef;
  border-top: 3px solid #cccccc;
  position: relative;
}

.st-a {
  margin-left: 47px;
}

.st-b {
  margin-left: 28px;
}

.st-sep {
  width: 1px;
  height: 36px;
  margin-left: 20px;
  background: #f8f8f8;
  flex: none;
}

.st-size {
  margin-left: 35px;
  width: 178px;
  color: #777;
  font-size: 22.5px;
  white-space: nowrap;
}

.pager {
  display: flex;
  align-items: center;
  margin-left: 1057px;
}

.pg-prev {
  margin-left: 39px;
}

.pg-input {
  width: 212px;
  height: 36px;
  margin-left: 27px;
  background: #fff;
  border-bottom: 2px solid #e4e4e4;
  box-sizing: border-box;
  text-align: center;
  line-height: 34px;
  color: #444;
}

.pg-next {
  margin-left: 31px;
}

.pg-last {
  margin-left: 43px;
}

.st-sep.v1 {
  margin-left: 276px;
}

.v-ic {
  margin-left: 28px;
}

.st-sep.v1 + .v-ic {
  margin-left: 18px;
}

.st-sep.v2 {
  margin-left: 12px;
}

.v-on {
  width: 47px;
  height: 48px;
  margin-left: 13px;
  background: #d5d9e8;
  display: flex;
  align-items: center;
  justify-content: center;
}

.first-on {
  margin-left: 21px;
}

.v-two {
  margin-left: 21px;
}

.st-sep.v3 {
  margin-left: 12px;
}

.zoom-val {
  margin-left: 36px;
  width: 45px;
  color: #666;
}

.zoom-tri {
  margin-left: 16px;
  border-left-width: 8px;
  border-right-width: 8px;
  border-top: 13px solid #666;
}

.z-minus {
  margin-left: 33px;
}

.slider {
  width: 180px;
  height: 6px;
  margin-left: 22px;
  position: relative;
  background: #cccccc;
}

.fill {
  width: 68px;
  height: 100%;
  background: #666;
}

.knob {
  position: absolute;
  left: 60px;
  top: -8px;
  width: 16px;
  height: 22px;
  box-sizing: border-box;
  background: #fff;
  border: 2px solid #666;
  border-radius: 50%;
}

.z-plus {
  margin-left: 23px;
}

.z-fit {
  margin-left: 32px;
}

</style>
